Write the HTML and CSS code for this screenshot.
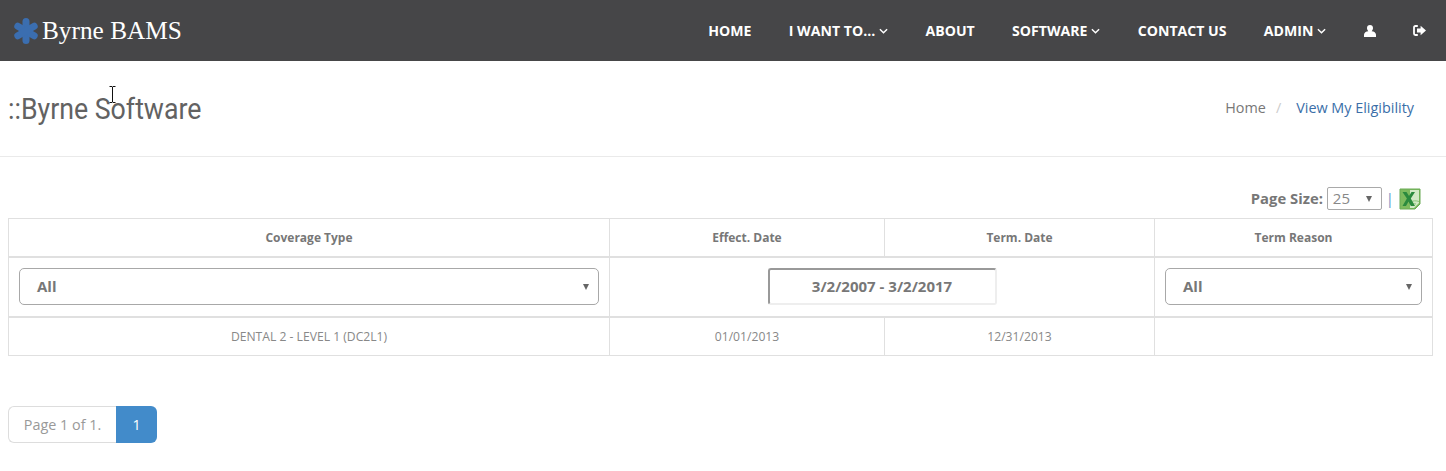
FILE: index.html
```html
<!DOCTYPE html>
<html lang="en">
<head>
<meta charset="utf-8">
<title>Byrne BAMS</title>
<link rel="stylesheet" href="styles.css">
</head>
<body>
<header class="navbar">
  <a class="brand">
    <svg class="brand-mark" viewBox="0 0 28 28" width="28" height="28" aria-hidden="true">
      <g stroke="#3b6eb0" stroke-width="7" stroke-linecap="round">
        <path d="M14 4.500V23.500"/>
        <path d="M5.800 9.200L22.200 18.800"/>
        <path d="M5.800 18.800L22.200 9.200"/>
      </g>
    </svg>
    <span>Byrne BAMS</span>
  </a>
  <nav class="menu">
    <a>HOME</a>
    <a>I WANT TO...<svg class="chev" viewBox="0 0 10 6" width="9" height="6"><path d="M1 1l4 4 4-4" fill="none" stroke="#fff" stroke-width="1.6"/></svg></a>
    <a>ABOUT</a>
    <a>SOFTWARE<svg class="chev" viewBox="0 0 10 6" width="9" height="6"><path d="M1 1l4 4 4-4" fill="none" stroke="#fff" stroke-width="1.6"/></svg></a>
    <a>CONTACT US</a>
    <a>ADMIN<svg class="chev" viewBox="0 0 10 6" width="9" height="6"><path d="M1 1l4 4 4-4" fill="none" stroke="#fff" stroke-width="1.6"/></svg></a>
    <a><svg viewBox="0 0 12 12" width="12" height="12"><path d="M6 0C7.900 0 9 1.300 9 3 9 4.400 8.400 5.500 7.700 6.200 10 6.400 12 7.600 12 9.800V12H0V9.800C0 7.600 2 6.400 4.300 6.200 3.600 5.500 3 4.400 3 3 3 1.300 4.100 0 6 0z" fill="#fff"/></svg></a>
    <a><svg viewBox="0 0 13 11" width="13" height="11"><path d="M4.800 1H2.400C1.500 1 1 1.600 1 2.400v6.200C1 9.400 1.500 10 2.400 10h2.400" fill="none" stroke="#fff" stroke-width="1.800"/><path d="M4 3.600h3.600V.8L13 5.500 7.600 10.200V7.400H4z" fill="#fff"/></svg></a>
  </nav>
</header>

<section class="titlebar">
  <h1>::Byrne Software</h1>
  <ol class="crumbs">
    <li>Home</li>
    <li class="sep">/</li>
    <li class="current">View My Eligibility</li>
  </ol>
</section>

<main class="content">
  <div class="toolbar">
    <b>Page Size:</b>
    <span class="size-select">25<i class="caret"></i></span>
    <span class="pipe">|</span>
    <svg class="excel" viewBox="0 0 22 22" width="22" height="22" aria-hidden="true">
      <path d="M1 1h20v15l-5 5H1z" fill="#7dbb5e" stroke="#6aaa55" stroke-width="1"/>
      <path d="M11 2h9v13l-5 5h-4z" fill="#d3e9c6"/>
      <path d="M12 14c2-1.500 5-1.500 8-.5M12 17c2-1.500 3-1.500 5-1" fill="none" stroke="#8cc57a" stroke-width="1"/>
      <path d="M3.500 4h4l2.500 4 2.500-4h3.500l-4.200 6.500L16 18h-4.200L9.500 13.500 7 18H3.500l4.400-7.500z" fill="#2b8a3e"/>
    </svg>
  </div>

  <table class="grid">
    <colgroup>
      <col class="c1"><col class="c2"><col class="c3"><col class="c4">
    </colgroup>
    <thead>
      <tr class="head">
        <th>Coverage Type</th>
        <th>Effect. Date</th>
        <th>Term. Date</th>
        <th>Term Reason</th>
      </tr>
    </thead>
    <tbody>
      <tr class="filters">
        <td><div class="filter-select">All<i class="caret"></i></div></td>
        <td colspan="2"><div class="range">3/2/2007 - 3/2/2017</div></td>
        <td><div class="filter-select">All<i class="caret"></i></div></td>
      </tr>
      <tr class="row">
        <td>DENTAL 2 - LEVEL 1 (DC2L1)</td>
        <td>01/01/2013</td>
        <td>12/31/2013</td>
        <td></td>
      </tr>
    </tbody>
  </table>

  <div class="pager">
    <span class="info">Page 1 of 1.</span>
    <span class="active">1</span>
  </div>
</main>

<svg class="ibeam" viewBox="0 0 7 17" width="7" height="17" aria-hidden="true">
  <path d="M0.500 0.500h2.500l.5.500.5-.5h2.500M3.500 1v15M0.500 16.500h2.500l.5-.5.5.5h2.500" fill="none" stroke="#111" stroke-width="1"/>
</svg>
</body>
</html>
```

FILE: styles.css
```css
* { box-sizing: border-box; }
html, body { margin: 0; padding: 0; }
body {
  background: #fff;
  color: #777;
  font-family: "Open Sans", "Liberation Sans", sans-serif;
  font-size: 13px;
  height: 471px;
  overflow: hidden;
  position: relative;
}

.navbar {
  height: 61px;
  background: #464648;
  display: flex;
  justify-content: space-between;
  align-items: center;
  padding: 0 0 0 12px;
}
.brand {
  display: flex;
  align-items: center;
  color: #fff;
  font-family: "Liberation Serif", serif;
  font-size: 25.300px;
  gap: 2px;
}
.brand-mark { display: block; }
.menu {
  display: flex;
  align-items: center;
  gap: 37.300px;
  padding-right: 20px;
}
.menu a {
  color: #fff;
  font-weight: 700;
  font-size: 14.100px;
  display: flex;
  align-items: center;
}
.chev { margin-left: 4px; }

.titlebar {
  height: 96px;
  border-bottom: 1px solid #eaeaea;
  display: flex;
  justify-content: space-between;
  align-items: center;
  padding: 0 32px 0 8px;
}
.titlebar h1 {
  margin: 0;
  font-family: Roboto, sans-serif;
  font-weight: 400;
  font-size: 29.500px;
  color: #626262;
  transform: scaleX(0.905);
  transform-origin: left center;
  white-space: nowrap;
}
.crumbs {
  list-style: none;
  margin: 0 0 2px;
  padding: 0;
  display: flex;
  gap: 10px;
  font-size: 14.400px;
  color: #777;
}
.crumbs .sep { color: #ccc; }
.crumbs .current { color: #3a6ea8; margin-left: 5px; }

.content { padding: 0 13px 0 8px; }

.toolbar {
  height: 61px;
  display: flex;
  justify-content: flex-end;
  align-items: flex-start;
  padding: 30px 12px 0 0;
  color: #777;
  font-size: 14.800px;
  gap: 4px;
}
.toolbar b { line-height: 23px; }
.size-select {
  width: 55px;
  height: 23px;
  border: 1px solid #a9a9a9;
  border-radius: 2px;
  padding: 0 5px;
  line-height: 21px;
  font-size: 15px;
  color: #888;
  position: relative;
}
.pipe { color: #5b93c7; line-height: 23px; margin: 0 1px 0 0; }
.excel { margin-top: 1px; }

.caret {
  position: absolute;
  top: 50%;
  margin-top: -3px;
  right: 9px;
  width: 0;
  height: 0;
  border-left: 3.500px solid transparent;
  border-right: 3.500px solid transparent;
  border-top: 6px solid #666;
}

.grid {
  width: 1424px;
  table-layout: fixed;
  border-collapse: collapse;
}
.c1 { width: 601px; }
.c2 { width: 275px; }
.c3 { width: 270px; }
.c4 { width: 278px; }
.grid th, .grid td {
  border: 1px solid #e0e0e0;
  text-align: center;
  padding: 0;
}
.head th {
  height: 38px;
  font-size: 12px;
  font-weight: 700;
  color: #777;
  border-bottom: 2px solid #e0e0e0;
}
.filters td {
  height: 60px;
  padding: 0 10px;
  border-bottom: 2px solid #e0e0e0;
}
.filter-select {
  position: relative;
  height: 37px;
  border: 1px solid #a8a8a8;
  border-radius: 5px;
  text-align: left;
  padding-left: 17px;
  line-height: 34px;
  font-size: 15px;
  font-weight: 700;
  color: #777;
}
.range {
  width: 229px;
  height: 37px;
  margin: 0 auto;
  border: 2px solid #eee;
  border-top-color: #999;
  border-left-color: #999;
  border-radius: 3px;
  line-height: 33px;
  font-size: 15px;
  font-weight: 700;
  color: #777;
}
.row td {
  height: 39px;
  font-size: 12.150px;
  color: #888;
  padding-top: 1px;
}

.pager {
  margin-top: 50px;
  display: inline-flex;
  height: 37px;
  font-size: 14.400px;
}
.pager span {
  display: block;
  line-height: 37px;
}
.info {
  width: 108px;
  border: 1px solid #ddd;
  border-right: 0;
  border-radius: 6px 0 0 6px;
  color: #999;
  text-align: center;
  line-height: 35px !important;
}
.active {
  width: 41px;
  background: #428bca;
  color: #fff;
  text-align: center;
  border-radius: 0 6px 6px 0;
}

.ibeam {
  position: absolute;
  left: 109px;
  top: 86px;
}
```
